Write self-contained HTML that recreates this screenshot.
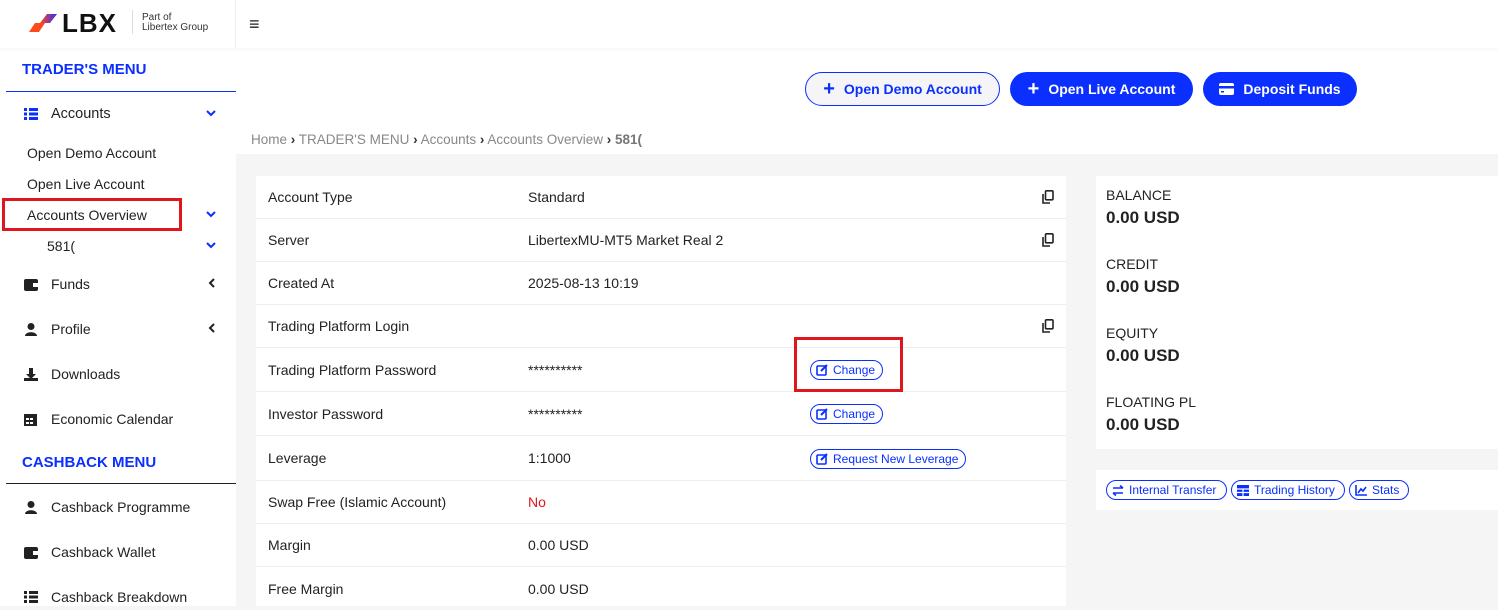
<!DOCTYPE html><html><head><meta charset="utf-8"><style>
*{box-sizing:border-box;margin:0;padding:0}
body{width:1498px;height:606px;overflow:hidden;font-family:"Liberation Sans",Arial,sans-serif;font-size:14px;color:#222;background:#f5f5f5;position:relative}
.abs{position:absolute}
.side{left:0;top:0;width:236px;height:606px;background:#fff}
.hdr{left:0;top:0;width:1498px;height:48px;background:#fff;box-shadow:0 2px 4px rgba(0,0,0,.04)}
.top{left:236px;top:48px;width:1262px;height:106px;background:#fff}
.blue{color:#0a2fff}
.mh{font-weight:bold;font-size:15px;color:#0a2fff}
.it{position:absolute;left:24px;font-size:14px;color:#222;display:flex;align-items:center}
.it svg{margin-right:13px}
.sub{position:absolute;left:27px;font-size:14px;color:#222}
.btn{position:absolute;top:72px;height:34px;border-radius:17px;font-weight:bold;font-size:14px;display:flex;align-items:center;justify-content:center;gap:9px}
.card{background:#fff;position:absolute}
.row{position:absolute;left:0;width:810px;height:43px;border-bottom:1px solid #eee;display:flex;align-items:center}
.row .l{position:absolute;left:12px}
.row .v{position:absolute;left:272px}
.pill{position:absolute;left:554px;height:20px;border:1px solid #0a2fff;border-radius:10px;color:#0a2fff;font-size:12px;display:flex;align-items:center;padding:0 7px 0 5px;gap:5px;background:#fff}
.cp{position:absolute;left:786px;width:12px;height:14px}
.lab{position:absolute;left:10px;font-size:14px;color:#222}
.val{position:absolute;left:10px;font-size:17px;font-weight:bold;color:#222}
</style></head><body>
<div class="abs side"></div>
<div class="abs top"></div>
<div class="abs hdr"></div>
<div class="abs" style="left:235px;top:0;width:1px;height:48px;background:#eee"></div>
<!-- logo -->
<svg class="abs" style="left:29px;top:13px" width="34" height="20" viewBox="0 0 34 20">
<defs><linearGradient id="g" x1="0" x2="1"><stop offset="0" stop-color="#ff4a1c"/><stop offset="1" stop-color="#2b2bff"/></linearGradient></defs>
<path d="M0 19 L10 19 L16 10 L6 10 Z" fill="#ff4a1c"/><path d="M11 10 L21 10 L28 1 L18 1 Z" fill="url(#g)"/>
</svg>
<div class="abs" style="left:62px;top:8px;font-size:26px;font-weight:bold;color:#111;letter-spacing:1px;line-height:30px">LBX</div>
<div class="abs" style="left:132px;top:10px;width:1px;height:24px;background:#ddd"></div>
<div class="abs" style="left:142px;top:13px;font-size:10px;line-height:10px;color:#333">Part of<br>Libertex Group</div>
<div class="abs" style="left:249px;top:14px;font-size:18px;color:#222;font-weight:bold">&#8801;</div>
<!-- sidebar -->
<div class="abs mh" style="left:22px;top:61px">TRADER'S MENU</div>
<div class="abs" style="left:6px;top:91px;width:230px;height:1px;background:#0a2fff"></div>
<div class="it blue" style="top:106px"><svg width="14" height="12"><g fill="#0a2fff"><rect x="0" y="0" width="3" height="3"/><rect x="5" y="0" width="9" height="3"/><rect x="0" y="4.5" width="3" height="3"/><rect x="5" y="4.5" width="9" height="3"/><rect x="0" y="9" width="3" height="3"/><rect x="5" y="9" width="9" height="3"/></g></svg><span style="font-size:14.5px">Accounts</span></div>
<div class="sub" style="top:145px">Open Demo Account</div>
<div class="sub" style="top:176px">Open Live Account</div>
<div class="abs" style="left:2px;top:198px;width:180px;height:33px;border:3px solid #e0161f"></div>
<div class="sub blue" style="top:207px">Accounts Overview</div>
<div class="sub blue" style="top:238px;left:47px">581(</div>
<svg class="abs" style="left:206px;top:211px" width="10" height="7"><path d="M1 1l4 4 4-4" stroke="#0a2fff" stroke-width="2" fill="none"/></svg>
<svg class="abs" style="left:206px;top:242px" width="10" height="7"><path d="M1 1l4 4 4-4" stroke="#0a2fff" stroke-width="2" fill="none"/></svg>
<svg class="abs" style="left:206px;top:110px" width="10" height="7"><path d="M1 1l4 4 4-4" stroke="#0a2fff" stroke-width="2" fill="none"/></svg>
<div class="it" style="top:276px"><svg width="14" height="13"><rect y="1" width="14" height="12" rx="2" fill="#222"/><rect x="9" y="5" width="5" height="4" fill="#fff"/></svg>Funds</div>
<svg class="abs" style="left:208px;top:278px" width="7" height="10"><path d="M6 1L2 5l4 4" stroke="#222" stroke-width="2" fill="none"/></svg>
<div class="it" style="top:321px"><svg width="14" height="13"><circle cx="7" cy="3.5" r="3.5" fill="#222"/><path d="M1 13c0-5 12-5 12 0z" fill="#222"/></svg>Profile</div>
<svg class="abs" style="left:208px;top:323px" width="7" height="10"><path d="M6 1L2 5l4 4" stroke="#222" stroke-width="2" fill="none"/></svg>
<div class="it" style="top:366px"><svg width="14" height="13"><path d="M5 0h4v6h3l-5 5-5-5h3z" fill="#222"/><rect y="10" width="14" height="3" fill="#222"/></svg>Downloads</div>
<div class="it" style="top:411px"><svg width="14" height="14"><rect y="2" width="13" height="12" fill="#222"/><rect x="2" y="6" width="3" height="2" fill="#fff"/><rect x="6" y="6" width="3" height="2" fill="#fff"/><rect x="2" y="10" width="3" height="2" fill="#fff"/><rect x="6" y="10" width="3" height="2" fill="#fff"/></svg>Economic Calendar</div>
<div class="abs mh" style="left:22px;top:454px">CASHBACK MENU</div>
<div class="abs" style="left:6px;top:483px;width:230px;height:1px;background:#222"></div>
<div class="it" style="top:499px"><svg width="14" height="13"><circle cx="7" cy="3.5" r="3.5" fill="#222"/><path d="M1 13c0-5 12-5 12 0z" fill="#222"/></svg>Cashback Programme</div>
<div class="it" style="top:544px"><svg width="14" height="13"><rect y="1" width="14" height="12" rx="2" fill="#222"/><rect x="9" y="5" width="5" height="4" fill="#fff"/></svg>Cashback Wallet</div>
<div class="it" style="top:589px"><svg width="14" height="12"><g fill="#222"><rect width="3" height="3"/><rect x="5" width="9" height="3"/><rect y="4.5" width="3" height="3"/><rect x="5" y="4.5" width="9" height="3"/><rect y="9" width="3" height="3"/><rect x="5" y="9" width="9" height="3"/></g></svg>Cashback Breakdown</div>
<!-- buttons -->
<div class="btn" style="left:805px;width:195px;border:1px solid #0a2fff;color:#0a2fff;background:#f5f5f7"><span style="font-size:20px;font-weight:bold;line-height:1">+</span>Open Demo Account</div>
<div class="btn" style="left:1010px;width:183px;background:#0a2fff;color:#fff"><span style="font-size:20px;line-height:1">+</span>Open Live Account</div>
<div class="btn" style="left:1203px;width:154px;background:#0a2fff;color:#fff"><svg width="15" height="12"><rect width="15" height="12" rx="2" fill="#fff"/><rect y="3" width="15" height="2.5" fill="#0a2fff"/><rect x="2" y="8" width="3" height="1.5" fill="#0a2fff"/></svg>Deposit Funds</div>
<!-- breadcrumb -->
<div class="abs" style="left:251px;top:132px;font-size:13.5px;color:#888">Home <b style="color:#333">&#8250;</b> TRADER'S MENU <b style="color:#333">&#8250;</b> Accounts <b style="color:#333">&#8250;</b> Accounts Overview <b style="color:#333">&#8250;</b> <b style="color:#777">581(</b></div>
<!-- main card -->
<div class="card" style="left:256px;top:176px;width:810px;height:430px">
<div class="row" style="top:0"><span class="l">Account Type</span><span class="v">Standard</span></div>
<div class="row" style="top:43px"><span class="l">Server</span><span class="v">LibertexMU-MT5 Market Real 2</span></div>
<div class="row" style="top:86px"><span class="l">Created At</span><span class="v">2025-08-13 10:19</span></div>
<div class="row" style="top:129px"><span class="l">Trading Platform Login</span></div>
<div class="row" style="top:172px;height:44px"><span class="l">Trading Platform Password</span><span class="v">**********</span></div>
<div class="row" style="top:216px;height:44px"><span class="l">Investor Password</span><span class="v">**********</span></div>
<div class="row" style="top:260px;height:45px"><span class="l">Leverage</span><span class="v">1:1000</span></div>
<div class="row" style="top:305px"><span class="l">Swap Free (Islamic Account)</span><span class="v" style="color:#e0161f">No</span></div>
<div class="row" style="top:348px"><span class="l">Margin</span><span class="v">0.00 USD</span></div>
<div class="row" style="top:391px;border:0"><span class="l">Free Margin</span><span class="v">0.00 USD</span></div>
<svg class="cp" style="top:14px" viewBox="0 0 12 14"><rect x="3.5" y="0.8" width="7.5" height="9" rx="1" fill="none" stroke="#222" stroke-width="1.6"/><path d="M1 4v9h7" fill="none" stroke="#222" stroke-width="1.6"/></svg>
<svg class="cp" style="top:57px" viewBox="0 0 12 14"><rect x="3.5" y="0.8" width="7.5" height="9" rx="1" fill="none" stroke="#222" stroke-width="1.6"/><path d="M1 4v9h7" fill="none" stroke="#222" stroke-width="1.6"/></svg>
<svg class="cp" style="top:143px" viewBox="0 0 12 14"><rect x="3.5" y="0.8" width="7.5" height="9" rx="1" fill="none" stroke="#222" stroke-width="1.6"/><path d="M1 4v9h7" fill="none" stroke="#222" stroke-width="1.6"/></svg>
<div class="pill" style="top:184px"><svg width="12" height="12"><rect x="1" y="2" width="9" height="9" rx="1" fill="none" stroke="#0a2fff" stroke-width="1.6"/><path d="M5 7l6-6" stroke="#0a2fff" stroke-width="2"/></svg>Change</div>
<div class="pill" style="top:228px"><svg width="12" height="12"><rect x="1" y="2" width="9" height="9" rx="1" fill="none" stroke="#0a2fff" stroke-width="1.6"/><path d="M5 7l6-6" stroke="#0a2fff" stroke-width="2"/></svg>Change</div>
<div class="pill" style="top:273px"><svg width="12" height="12"><rect x="1" y="2" width="9" height="9" rx="1" fill="none" stroke="#0a2fff" stroke-width="1.6"/><path d="M5 7l6-6" stroke="#0a2fff" stroke-width="2"/></svg>Request New Leverage</div>
</div>
<div class="abs" style="left:794px;top:337px;width:109px;height:55px;border:3px solid #e0161f"></div>
<!-- right -->
<div class="card" style="left:1096px;top:176px;width:402px;height:273px">
<div class="lab" style="top:11px">BALANCE</div><div class="val" style="top:32px">0.00 USD</div>
<div class="lab" style="top:80px">CREDIT</div><div class="val" style="top:101px">0.00 USD</div>
<div class="lab" style="top:149px">EQUITY</div><div class="val" style="top:170px">0.00 USD</div>
<div class="lab" style="top:218px">FLOATING PL</div><div class="val" style="top:239px">0.00 USD</div>
</div>
<div class="card" style="left:1096px;top:470px;width:402px;height:40px">
<div class="pill" style="left:10px;top:10px;width:121px"><svg width="12" height="11"><path d="M1 3h10M8 0.5l3 2.5M11 8H1M4 10.5L1 8" stroke="#0a2fff" stroke-width="1.6" fill="none"/></svg>Internal Transfer</div>
<div class="pill" style="left:135px;top:10px;width:114px"><svg width="12" height="11"><rect width="12" height="11" fill="#0a2fff"/><path d="M0 4h12M6 4v7M0 7.5h12" stroke="#fff" stroke-width="1.2"/></svg>Trading History</div>
<div class="pill" style="left:253px;top:10px;width:60px"><svg width="12" height="11"><path d="M1 0v10h11M3 8l3-4 2 2 3-4" stroke="#0a2fff" stroke-width="1.6" fill="none"/></svg>Stats</div>
</div>
</body></html>
